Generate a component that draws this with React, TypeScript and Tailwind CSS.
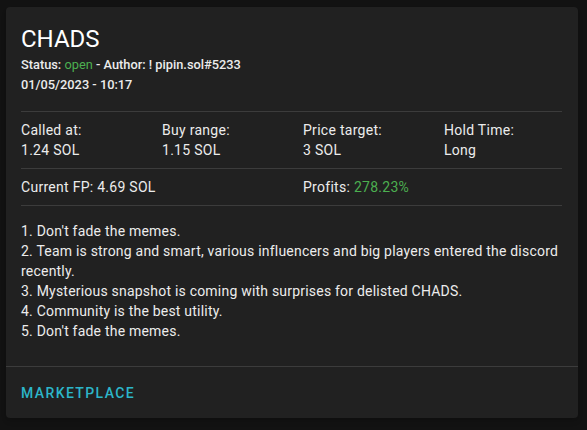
// Call card for a listed NFT project
// Dark material-style card

const stats = [
  { label: 'Called at:', value: '1.24 SOL' },
  { label: 'Buy range:', value: '1.15 SOL' },
  { label: 'Price target:', value: '3 SOL' },
  { label: 'Hold Time:', value: 'Long' },
];

const notes = [
  "1. Don't fade the memes.",
  '2. Team is strong and smart, various influencers and big players entered the discord recently.',
  '3. Mysterious snapshot is coming with surprises for delisted CHADS.',
  '4. Community is the best utility.',
  "5. Don't fade the memes.",
];

const Divider = () => <div className="h-px bg-white/[0.12]" />;

const App = () => {
  return (
    <div
      className="h-[430px] w-[587px] bg-[#121212] pt-[7px] pl-[6px] text-[#ececec]"
      style={{ fontFamily: 'Roboto, "Liberation Sans", sans-serif' }}
    >
      <div className="w-[572px] h-[411px] rounded bg-[#212121] shadow-md flex flex-col">
        <div className="pl-[15px] pr-4 pt-4 pb-[25px]">
          <h1 className="text-[24px] leading-[32px] text-white">CHADS</h1>
          <div className="text-[12.8px] leading-5 font-medium">
            Status: <span className="text-[#4caf50] font-normal">open</span> - Author: ! pipin.sol#5233
          </div>
          <div className="text-[12.8px] leading-5 font-medium">01/05/2023 - 10:17</div>

          <div className="mt-4">
            <Divider />
          </div>
          <div className="grid grid-cols-[141px_141px_141px_1fr] py-2 text-sm leading-5 tracking-[0.02em]">
            {stats.map((s) => (
              <div key={s.label}>
                <div>{s.label}</div>
                <div>{s.value}</div>
              </div>
            ))}
          </div>
          <Divider />
          <div className="grid grid-cols-[282px_1fr] py-2 text-sm leading-5 tracking-[0.02em]">
            <div>Current FP: 4.69 SOL</div>
            <div>
              Profits: <span className="text-[#4caf50]">278.23%</span>
            </div>
          </div>
          <Divider />
          <div className="pt-[15px] text-sm leading-5 tracking-[0.015em]">
            {notes.map((n, i) => (
              <p key={i}>{n}</p>
            ))}
          </div>
        </div>
        <Divider />
        <div className="flex-1 flex items-center pl-[15px] pt-px">
          <span className="text-sm font-medium uppercase tracking-[0.1em] text-[#2cb6c9]">Marketplace</span>
        </div>
      </div>
    </div>
  );
};

export default App;
